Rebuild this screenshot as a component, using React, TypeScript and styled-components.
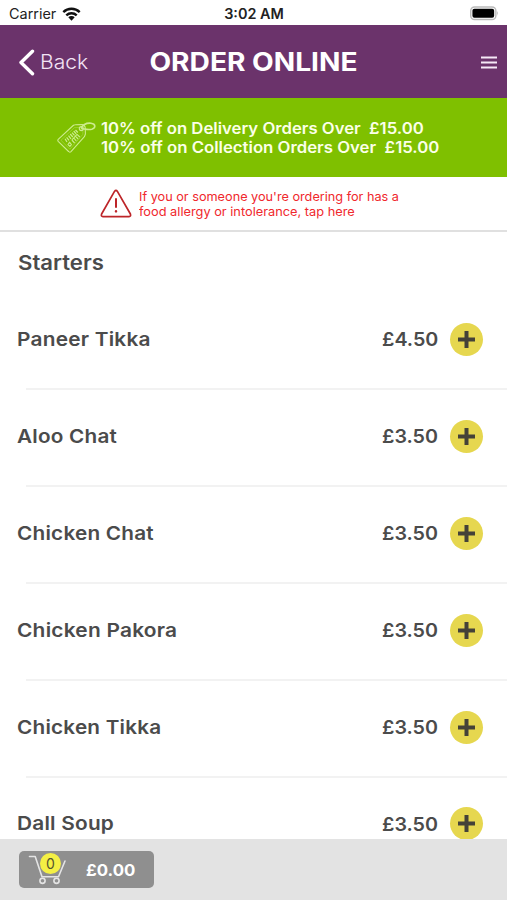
import React from "react";
import styled, { createGlobalStyle } from "styled-components";

const GlobalStyle = createGlobalStyle`
  *, *::before, *::after { box-sizing: border-box; }
  body { margin: 0; background: #fff; }
  button { border: 0; padding: 0; background: none; font: inherit; color: inherit; }
`;

const Screen = styled.div`
  display: flex;
  flex-direction: column;
  width: 507px;
  height: 900px;
  overflow: hidden;
  background: #fff;
  color: #4b4b4b;
  font-family: Inter, "Liberation Sans", sans-serif;
`;

const Label = styled.span<{
  $size: number;
  $weight?: number;
  $spacing?: number;
  $stretch?: number;
  $origin?: string;
}>`
  display: inline-block;
  margin: 0;
  font-size: ${(p) => p.$size}px;
  font-weight: ${(p) => p.$weight ?? 600};
  letter-spacing: ${(p) => p.$spacing ?? 0}px;
  white-space: pre;
  transform: scaleX(${(p) => p.$stretch ?? 1});
  transform-origin: ${(p) => p.$origin ?? "left"};
`;

const StatusBar = styled.div`
  display: grid;
  grid-template-columns: 1fr auto 1fr;
  align-items: center;
  flex: none;
  height: 25px;
  padding: 2px 8px 0 9px;
  color: #222;
`;

const Carrier = styled.div`
  display: flex;
  align-items: center;
  gap: 7px;
`;

const StatusEnd = styled.div`
  display: flex;
  justify-content: flex-end;
`;

const Header = styled.header`
  display: grid;
  grid-template-columns: 1fr auto 1fr;
  align-items: center;
  flex: none;
  height: 73px;
  padding: 1px 10px 0;
  background: #6b336b;
  color: #fff;
`;

const BackButton = styled.button`
  display: flex;
  align-items: center;
  margin-left: 8px;
  gap: 4px;
  color: #f3e3f5;
`;

const MenuButton = styled.button`
  display: flex;
  justify-self: end;
`;

const Promo = styled.section`
  display: flex;
  align-items: center;
  flex: none;
  height: 79px;
  padding-left: 57px;
  gap: 5px;
  background: #7fc000;
  color: #fbffe8;
`;

const PromoLines = styled.div`
  display: flex;
  flex-direction: column;
  line-height: 19px;
`;

const Allergy = styled.section`
  display: flex;
  align-items: center;
  flex: none;
  height: 55px;
  padding-left: 100px;
  gap: 7px;
  border-bottom: 2px solid #e0e0e0;
  color: #f0282d;
`;

const AllergyLines = styled.div`
  display: flex;
  flex-direction: column;
  line-height: 15px;
`;

const Menu = styled.main`
  flex: 1;
  min-height: 0;
  overflow: hidden;
`;

const SectionTitle = styled.h2`
  display: flex;
  align-items: center;
  height: 61.5px;
  margin: 0;
  padding-left: 18px;
`;

const MenuRow = styled.div`
  display: flex;
  align-items: center;
  height: 96.9px;
  padding: 0 24px 5px 17px;
  background: linear-gradient(#f2f2f2, #f2f2f2) 26px 100% / 100% 2px no-repeat;
`;

const Price = styled.div`
  width: 57px;
  margin: 0 11px 0 auto;
  padding-top: 1px;
`;

const AddButton = styled.button`
  display: flex;
  align-items: center;
  justify-content: center;
  width: 33px;
  height: 33px;
  border-radius: 50%;
  background: #e6d74f;
`;

const Footer = styled.footer`
  display: flex;
  flex: none;
  height: 61px;
  padding: 12px 19px;
  background: #e3e3e3;
`;

const BasketButton = styled.button`
  display: flex;
  align-items: center;
  width: 135px;
  height: 37px;
  padding-left: 9px;
  gap: 19px;
  border-radius: 5px;
  background: #8f8f8f;
  color: #fff;
`;

const CartHolder = styled.span`
  position: relative;
  display: flex;
`;

const CountBadge = styled.span`
  position: absolute;
  top: -1px;
  left: 12px;
  display: flex;
  align-items: center;
  justify-content: center;
  width: 21px;
  height: 21px;
  border-radius: 50%;
  background: #f4f044;
  color: #55552f;
`;

const WifiIcon = () => (
  <svg width="19" height="14" viewBox="0 0 19 14">
    <g fill="none" stroke="#111" strokeWidth="2.4">
      <path d="M1.3 5.1 A11.8 11.8 0 0 1 17.7 5.1" />
      <path d="M4.3 8.3 A7.5 7.5 0 0 1 14.7 8.3" />
    </g>
    <path d="M6.3 10.3 A4.6 4.6 0 0 1 12.7 10.3 L9.5 13.7Z" fill="#111" />
  </svg>
);

const BatteryIcon = () => (
  <svg width="29" height="15" viewBox="0 0 30 15">
    <rect x=".75" y=".75" width="26" height="13" rx="4" fill="#fff" stroke="#bababa" strokeWidth="1.5" />
    <rect x="2.5" y="2.7" width="22.5" height="9.2" rx="2" fill="#000" />
    <path d="M28.2 4.8 Q30 7.3 28.2 9.8Z" fill="#aaa" />
  </svg>
);

const BackIcon = () => (
  <svg width="18" height="27" viewBox="0 0 18 27">
    <path d="M14.5 2.2 L3 13.5 L14.5 24.8" fill="none" stroke="#fff" strokeWidth="3.4" strokeLinecap="round" strokeLinejoin="round" />
  </svg>
);

const MenuIcon = () => (
  <svg width="16" height="13" viewBox="0 0 16 13">
    <path d="M0 1.5H16M0 6.5H16M0 11.5H16" stroke="#f6e9f7" strokeWidth="2" />
  </svg>
);

const TagIcon = () => (
  <svg width="39" height="32" viewBox="0 0 39 32" fill="none" stroke="#cdec8e" strokeWidth="1.1" strokeLinejoin="round">
    <path d="M1.2 17.3 L16.2 3.5 Q17 2.8 18.2 2.8 L25 2.5 Q27.8 2.7 28.2 5.5 L28.4 12 L27.4 14.7 L14 29.6 Q12.8 30.8 11.6 29.5 L1.2 19.3 Q.4 18.3 1.2 17.3Z" />
    <path d="M4 18.3 L17.3 5.7 L24 5.3 L26 7.4 L25.8 12.5 L12.8 27.2Z" strokeWidth=".5" opacity=".7" />
    <circle cx="24.3" cy="6.6" r="2" />
    <path d="M24.2 6.5 C26 2.3 30 .9 34 1.2 C38.8 1.7 39 6 34.8 7.2 C31 8.1 28.2 7 24.2 6.5" strokeWidth="1.6" />
    <path d="M8 16.8 L10 20 M9.6 15.3 L12 18.4 M11.5 13.7 L14 16.8 M13.2 12 L15.8 15 M15 10.6 L17.5 13.4 M16.7 9 L19.2 11.8 M18.5 8 L20.8 10.5" strokeWidth="1.2" />
    <path d="M11 22.6 L12.5 20.2 L14.4 22.6 L12.9 24.3Z M14.8 18 L17.6 21 M16.7 16 L19.3 18.8 M18.4 14.2 L21.1 17 M20 12.4 L22.8 15 M14.8 18 L20 12.4" strokeWidth="1.1" />
  </svg>
);

const WarningIcon = () => (
  <svg width="32" height="29" viewBox="0 0 32 29" fill="none" stroke="#bd2529" strokeLinecap="round" strokeLinejoin="round">
    <path d="M14.5 2.4 Q16 .4 17.4 2.4 L30.4 25 Q31.2 27.5 29 27.7 H3 Q.7 27.5 1.6 25Z" strokeWidth="1.7" />
    <path d="M16 10 V18" strokeWidth="2" />
    <path d="M16 22.2 V22.4" strokeWidth="2.4" />
  </svg>
);

const PlusIcon = () => (
  <svg width="17" height="17" viewBox="0 0 17 17">
    <path d="M8.5 0V17M0 8.5H17" stroke="#444238" strokeWidth="4" />
  </svg>
);

const CartIcon = () => (
  <svg width="39" height="31" viewBox="0 0 39 31" fill="none" stroke="#e4e4e4" strokeWidth="1.6" strokeLinecap="round" strokeLinejoin="round">
    <path d="M1.5 2.5 H7.2 L14 22.7 H30.5 L37 7" />
    <circle cx="14.5" cy="26.8" r="2.6" />
    <circle cx="28.5" cy="26.8" r="2.6" />
  </svg>
);

type Item = { name: string; price: string; stretch: number };

const items: Item[] = [
  { name: "Paneer Tikka", price: "£4.50", stretch: 1.097 },
  { name: "Aloo Chat", price: "£3.50", stretch: 1.09 },
  { name: "Chicken Chat", price: "£3.50", stretch: 1.092 },
  { name: "Chicken Pakora", price: "£3.50", stretch: 1.1 },
  { name: "Chicken Tikka", price: "£3.50", stretch: 1.091 },
  { name: "Dall Soup", price: "£3.50", stretch: 1.096 },
];

export default function App() {
  return (
    <>
      <GlobalStyle />
      <Screen>
        <StatusBar>
          <Carrier>
            <Label $size={14} $weight={400} $stretch={1.03}>Carrier</Label>
            <WifiIcon />
          </Carrier>
          <Label $size={14} $stretch={1.03} $origin="center">3:02 AM</Label>
          <StatusEnd><BatteryIcon /></StatusEnd>
        </StatusBar>
        <Header>
          <BackButton>
            <BackIcon />
            <Label $size={19.5} $weight={300} $stretch={1.08}>Back</Label>
          </BackButton>
          <Label as="h1" $size={25} $weight={700} $stretch={1.125} $origin="center">ORDER ONLINE</Label>
          <MenuButton aria-label="Menu"><MenuIcon /></MenuButton>
        </Header>
        <Promo>
          <TagIcon />
          <PromoLines>
            <Label $size={15.5} $stretch={1.078}>{"10% off on Delivery Orders Over  £15.00"}</Label>
            <Label $size={15.5} $stretch={1.081}>{"10% off on Collection Orders Over  £15.00"}</Label>
          </PromoLines>
        </Promo>
        <Allergy>
          <WarningIcon />
          <AllergyLines>
            <Label $size={12.3} $weight={400} $stretch={1.032}>If you or someone you're ordering for has a</Label>
            <Label $size={12.3} $weight={400} $stretch={1.04}>food allergy or intolerance, tap here</Label>
          </AllergyLines>
        </Allergy>
        <Menu>
          <SectionTitle><Label $size={20.5} $stretch={1.08}>Starters</Label></SectionTitle>
          {items.map((item) => (
            <MenuRow key={item.name}>
              <Label $size={19} $spacing={0.2} $stretch={item.stretch}>{item.name}</Label>
              <Price><Label $size={19} $stretch={1.037}>{item.price}</Label></Price>
              <AddButton aria-label={`Add ${item.name}`}><PlusIcon /></AddButton>
            </MenuRow>
          ))}
        </Menu>
        <Footer>
          <BasketButton>
            <CartHolder>
              <CartIcon />
              <CountBadge><Label $size={14} $weight={400}>0</Label></CountBadge>
            </CartHolder>
            <Label $size={16.5} $weight={700} $stretch={1.02}>£0.00</Label>
          </BasketButton>
        </Footer>
      </Screen>
    </>
  );
}
